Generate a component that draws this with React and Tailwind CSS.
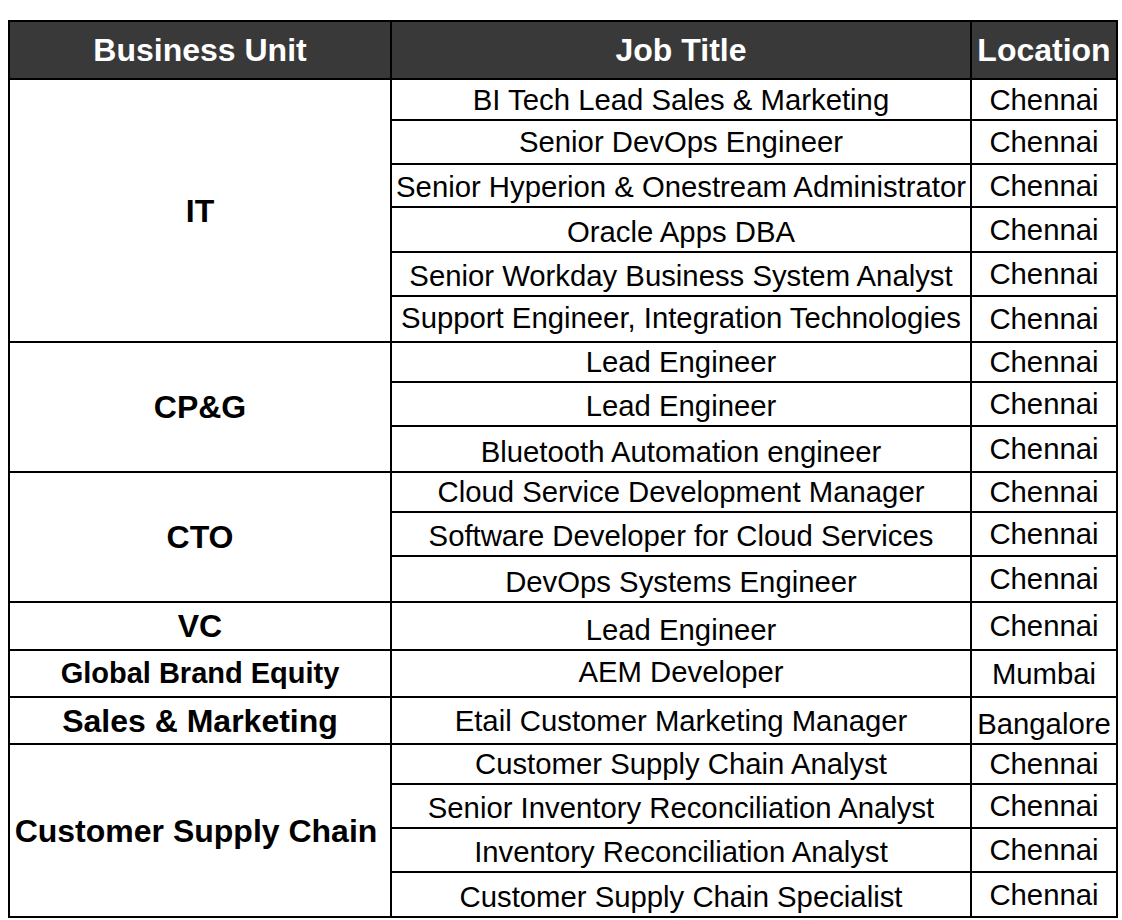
import { Fragment } from "react";

const groups = [
  {
    unit: "IT",
    span: "row-span-6",
    unitCls: "text-[32px]",
    jobs: [
      ["BI Tech Lead Sales & Marketing", "Chennai", "", ""],
      ["Senior DevOps Engineer", "Chennai", "", ""],
      ["Senior Hyperion & Onestream Administrator", "Chennai", "pt-[3px]", ""],
      ["Oracle Apps DBA", "Chennai", "pt-[5px]", ""],
      ["Senior Workday Business System Analyst", "Chennai", "pt-[4px]", ""],
      ["Support Engineer, Integration Technologies", "Chennai", "pb-[2px]", ""],
    ],
  },
  {
    unit: "CP&G",
    span: "row-span-3",
    unitCls: "text-[32px]",
    jobs: [
      ["Lead Engineer", "Chennai", "", ""],
      ["Lead Engineer", "Chennai", "pt-[4px]", ""],
      ["Bluetooth Automation engineer", "Chennai", "pt-[6px]", ""],
    ],
  },
  {
    unit: "CTO",
    span: "row-span-3",
    unitCls: "text-[32px]",
    jobs: [
      ["Cloud Service Development Manager", "Chennai", "", ""],
      ["Software Developer for Cloud Services", "Chennai", "pt-[4px]", ""],
      ["DevOps Systems Engineer", "Chennai", "pt-[6px]", ""],
    ],
  },
  {
    unit: "VC",
    span: "row-span-1",
    unitCls: "text-[32px]",
    jobs: [["Lead Engineer", "Chennai", "pt-[8px]", ""]],
  },
  {
    unit: "Global Brand Equity",
    span: "row-span-1",
    unitCls: "text-[29px]",
    jobs: [["AEM Developer", "Mumbai", "pb-[3px]", ""]],
  },
  {
    unit: "Sales & Marketing",
    span: "row-span-1",
    unitCls: "text-[32px]",
    jobs: [["Etail Customer Marketing Manager", "Bangalore", "", "pt-[7px]"]],
  },
  {
    unit: "Customer Supply Chain",
    span: "row-span-4",
    unitCls: "text-[32px] pr-[8px]",
    jobs: [
      ["Customer Supply Chain Analyst", "Chennai", "", ""],
      ["Senior Inventory Reconciliation Analyst", "Chennai", "pt-[4px]", ""],
      ["Inventory Reconciliation Analyst", "Chennai", "pt-[4px]", ""],
      ["Customer Supply Chain Specialist", "Chennai", "pt-[5px]", ""],
    ],
  },
];

export default function App() {
  return (
    <div className="min-h-[920px] bg-white pt-[20px] pl-[8px] font-['Liberation_Sans',Arial,sans-serif] text-black">
      <div className="grid w-[1110px] grid-cols-[380px_578px_144px] grid-rows-[56px_39px_42px_41px_43px_42px_44px_38px_42px_44px_38px_42px_44px_46px_45px_45px_38px_42px_42px_43px] gap-[2px] bg-black p-[2px]">
        <div className="flex items-center justify-center bg-[#393939] text-[32px] font-bold text-white">
          Business Unit
        </div>
        <div className="flex items-center justify-center bg-[#393939] text-[32px] font-bold text-white">
          Job Title
        </div>
        <div className="flex items-center justify-center bg-[#393939] text-[32px] font-bold text-white">
          Location
        </div>

        {groups.map((g) => (
          <Fragment key={g.unit}>
            <div
              className={`${g.span} ${g.unitCls} flex items-center justify-center whitespace-nowrap bg-white font-bold leading-none`}
            >
              {g.unit}
            </div>
            {g.jobs.map((j, i) => (
              <Fragment key={i}>
                <div
                  className={`${j[2]} flex items-center justify-center whitespace-nowrap bg-white text-[29.3px] leading-none`}
                >
                  {j[0]}
                </div>
                <div
                  className={`${j[3]} flex items-center justify-center whitespace-nowrap bg-white text-[29.3px] leading-none`}
                >
                  {j[1]}
                </div>
              </Fragment>
            ))}
          </Fragment>
        ))}
      </div>
    </div>
  );
}
